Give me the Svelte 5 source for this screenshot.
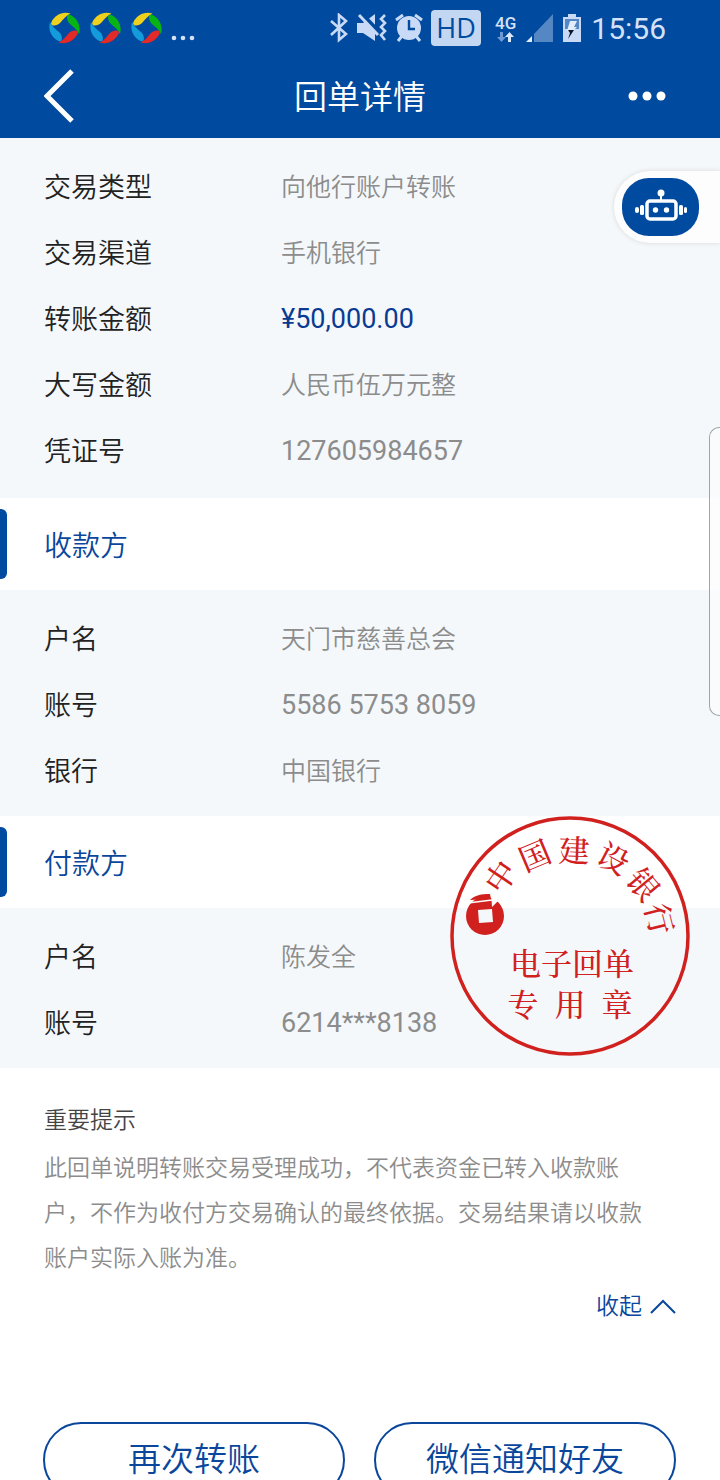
<script lang="ts">
    type Row = { label: string; value: string; kind?: "number" | "amount" };

    const transaction: Row[] = [
        { label: "交易类型", value: "向他行账户转账" },
        { label: "交易渠道", value: "手机银行" },
        { label: "转账金额", value: "¥50,000.00", kind: "amount" },
        { label: "大写金额", value: "人民币伍万元整" },
        { label: "凭证号", value: "127605984657", kind: "number" },
    ];

    const payee: Row[] = [
        { label: "户名", value: "天门市慈善总会" },
        { label: "账号", value: "5586 5753 8059", kind: "number" },
        { label: "银行", value: "中国银行" },
    ];

    const payer: Row[] = [
        { label: "户名", value: "陈发全" },
        { label: "账号", value: "6214***8138", kind: "number" },
    ];

    // characters along the upper arc of the seal
    const sealArc = [
        { char: "中", x: 51, y: 61, angle: -56 },
        { char: "国", x: 85, y: 40, angle: -23 },
        { char: "建", x: 124, y: 35, angle: 2 },
        { char: "设", x: 163, y: 43, angle: 28 },
        { char: "银", x: 193, y: 69, angle: 50 },
        { char: "行", x: 209, y: 103, angle: 76 },
    ];

    const ballColors = ["#eed01e", "#08b315", "#e22a28", "#149bdc"];

    let expanded = $state(true);
</script>

{#snippet rows(items: Row[])}
    <dl class="rows">
        {#each items as item}
            <div class="row">
                <dt>{item.label}</dt>
                <dd class={item.kind}>{item.value}</dd>
            </div>
        {/each}
    </dl>
{/snippet}

<div class="page">
    <header>
        <div class="status">
            <div class="apps">
                {#each [0, 1, 2] as _}
                    <svg width="33" height="32" viewBox="0 0 32 32">
                        {#each ballColors as color, i}
                            <path
                                fill={color}
                                transform="rotate({i * 90} 16 16)"
                                d="M3 10C6 4 13 -1 22 1.500C17 4 15 7 12 10.500C9 14 1 15 3 10Z"
                            />
                        {/each}
                    </svg>
                {/each}
                <svg width="27" height="34" viewBox="0 0 27 34" fill="#d4e1f6">
                    <circle cx="3" cy="27" r="2.300" />
                    <circle cx="12" cy="27" r="2.300" />
                    <circle cx="21" cy="27" r="2.300" />
                </svg>
            </div>
            <div class="system">
                <svg width="20" height="30" viewBox="0 0 20 30" fill="none" stroke="#c8daf5" stroke-width="2.600">
                    <path d="M2 8L17 21L10 27V2L17 8L2 22" />
                </svg>
                <svg width="30" height="30" viewBox="0 0 30 30">
                    <path fill="#c8daf5" d="M0 10H6L18 1V28L6 20H0Z" />
                    <path fill="none" stroke="#004a9f" stroke-width="4" d="M4 0L24 21" />
                    <path fill="none" stroke="#c8daf5" stroke-width="3" d="M2 2L21 22" />
                    <path fill="none" stroke="#c8daf5" stroke-width="2.600" d="M28 2L24 6L28 10L24 14L28 18L24 22L28 27" />
                </svg>
                <svg width="28" height="30" viewBox="0 0 28 30">
                    <circle cx="14" cy="15" r="12" fill="#c8daf5" />
                    <path fill="none" stroke="#c8daf5" stroke-width="3" d="M1 7L8 2M20 2L27 7M7 23L3 28M21 23L25 28" />
                    <path fill="none" stroke="#004a9f" stroke-width="2.400" d="M14 7V16H20" />
                </svg>
                <span class="hd">HD</span>
                <span class="network">
                    4G
                    <svg width="18" height="10" viewBox="0 0 18 10">
                        <path fill="#6d98d2" d="M3 0H6V5H9L4.500 10L0 5H3Z" />
                        <path fill="#dce8fa" d="M11 10H14V5H17L12.500 0L8 5H11Z" />
                    </svg>
                </span>
                <svg width="27" height="28" viewBox="0 0 27 28">
                    <path fill="#5587c5" d="M8 20L27 0V28H8Z" />
                    <path fill="#e2edfb" d="M0 28L6 22V28Z" />
                </svg>
                <svg class="battery" width="18" height="28" viewBox="0 0 18 28">
                    <path fill="#c8daf5" d="M5 0H13V3H18V28H0V3H5Z" />
                    <path fill="#5587c5" d="M2 5H16V15H2Z" />
                    <path fill="#e2edfb" d="M7 7H14L11 13H14L10 17H4Z" />
                    <path fill="#0b1828" d="M5 16H11L5 25L7 19Z" />
                </svg>
                <time>15:56</time>
            </div>
        </div>
        <nav>
            <button class="icon-button" aria-label="返回">
                <svg width="32" height="54" viewBox="0 0 32 54" fill="none" stroke="#fff" stroke-width="5">
                    <path d="M28 2L3 27L28 52" />
                </svg>
            </button>
            <h1>回单详情</h1>
            <button class="icon-button more" aria-label="更多">
                <svg width="38" height="10" viewBox="0 0 38 10" fill="#fff">
                    <circle cx="5" cy="5" r="4.500" />
                    <circle cx="19" cy="5" r="4.500" />
                    <circle cx="33" cy="5" r="4.500" />
                </svg>
            </button>
        </nav>
    </header>

    <main>
        {@render rows(transaction)}

        <section>
            <h2>收款方</h2>
            {@render rows(payee)}
        </section>

        <section class="payer">
            <h2>付款方</h2>
            {@render rows(payer)}
            <svg class="seal" width="240" height="240" viewBox="0 0 240 240">
                <circle cx="120" cy="120" r="118" fill="none" stroke="#d0211f" stroke-width="3.500" />
                <circle cx="35" cy="100" r="19" fill="#d0211f" />
                <path fill="#f4f8fb" d="M28 94L42 93L43 106L29 107Z" />
                <path fill="#fff" d="M41 76H58V84H49L42 91Z" />
                <path fill="#d0211f" d="M20 84C25 79 31 78 40 78L41 83Z" />
                <path fill="none" stroke="#fff" stroke-width="1.500" d="M18 87L42 84" />
                {#each sealArc as { char, x, y, angle }}
                    <text {x} {y} dy="11" transform="rotate({angle} {x} {y})">{char}</text>
                {/each}
                <text x="122" y="159" class="wide">电子回单</text>
                <text x="73" y="200">专</text>
                <text x="120" y="200">用</text>
                <text x="167" y="200">章</text>
            </svg>
        </section>

        <div class="notice">
            {#if expanded}
                <h3>重要提示</h3>
                <p>
                    此回单说明转账交易受理成功，不代表资金已转入收款账户，不作为收付方交易确认的最终依据。交易结果请以收款账户实际入账为准。
                </p>
            {/if}
            <button class="toggle" onclick={() => (expanded = !expanded)}>
                {expanded ? "收起" : "展开"}
                <svg class:flipped={!expanded} width="26" height="16" viewBox="0 0 26 16" fill="none" stroke="#0a479c" stroke-width="2">
                    <path d="M1 14L13 2L25 14" />
                </svg>
            </button>
        </div>

        <div class="actions">
            <button>再次转账</button>
            <button>微信通知好友</button>
        </div>
    </main>

    <div class="assistant">
        <button aria-label="智能客服">
            <svg width="52" height="36" viewBox="0 0 52 36">
                <rect x="12" y="12" width="29" height="18" rx="3" fill="none" stroke="#fff" stroke-width="3.500" />
                <path stroke="#fff" stroke-width="2" d="M26 5V12" />
                <g fill="#fff">
                    <circle cx="26" cy="4" r="3.500" />
                    <circle cx="20.500" cy="21" r="2.700" />
                    <circle cx="31.500" cy="21" r="2.700" />
                    <rect x="5" y="16" width="4" height="10" rx="1.500" />
                    <rect x="44" y="16" width="4" height="10" rx="1.500" />
                    <rect x="0" y="18" width="4" height="6" rx="2" />
                    <rect x="49" y="18" width="3" height="6" rx="1.500" />
                </g>
            </svg>
        </button>
    </div>
    <div class="edge-panel"></div>
</div>

<style>
    :global(body) {
        margin: 0;
        background: #fff;
    }

    .page {
        position: relative;
        height: 100vh;
        overflow: hidden auto;
        scrollbar-width: none;
        background: #fff;
        color: #222;
        font-family: Roboto, "Noto Sans CJK SC", sans-serif;
        font-weight: 350;
    }

    h1,
    h2,
    h3,
    p,
    dl,
    dd {
        margin: 0;
        font-weight: 350;
    }

    svg {
        display: block;
        flex: none;
    }

    button {
        padding: 0;
        border: 0;
        background: none;
        color: inherit;
        font: inherit;
        cursor: pointer;
    }

    header {
        height: 138px;
        background: #004a9f;
        color: #fff;
    }

    .status {
        display: flex;
        justify-content: space-between;
        height: 56px;
        padding: 0 54px 0 48px;
    }

    .apps,
    .system {
        display: flex;
        align-items: center;
        gap: 8px;
        color: #d4e1f6;
    }

    .hd {
        width: 50px;
        margin-right: 6px;
        border-radius: 4px;
        background: #c3d6f2;
        color: #004a9f;
        font-family: "Open Sans", sans-serif;
        font-size: 27px;
        font-weight: 400;
        line-height: 36px;
        text-align: center;
    }

    .network {
        display: flex;
        flex-direction: column;
        align-items: center;
        gap: 1px;
        margin-right: 2px;
        font-size: 17px;
        font-weight: 500;
        line-height: 16px;
    }

    .battery {
        margin: 0 2px;
    }

    time {
        font-size: 30px;
        font-weight: 400;
    }

    nav {
        display: grid;
        grid-template-columns: 1fr auto 1fr;
        align-items: center;
        height: 80px;
        padding: 0 44px;
    }

    h1 {
        padding-top: 4px;
        font-size: 33px;
        line-height: 48px;
    }

    .icon-button {
        justify-self: start;
    }

    .more {
        justify-self: end;
        margin-right: 10px;
    }

    .rows {
        padding: 14px 44px;
        background: #f4f8fb;
    }

    main > .rows {
        padding-bottom: 16px;
    }

    .row {
        display: grid;
        grid-template-columns: 3fr 5fr;
        align-items: center;
        height: 66px;
    }

    dt {
        font-size: 27px;
    }

    dd {
        color: #8c8c8c;
        font-size: 25px;
    }

    .number,
    .amount {
        padding-top: 3px;
        font-size: 27px;
        font-weight: 400;
    }

    .amount {
        color: #0a3b92;
    }

    h2 {
        display: flex;
        align-items: center;
        gap: 37px;
        height: 92px;
        color: #0a479c;
        font-size: 28px;
    }

    h2::before {
        content: "";
        width: 7px;
        height: 70px;
        border-radius: 0 6px 6px 0;
        background: #004a9f;
    }

    .payer {
        position: relative;
    }

    .seal {
        position: absolute;
        top: 0;
        right: 30px;
    }

    .seal text {
        fill: #d0211f;
        font-family: "Noto Serif CJK SC", "Noto Sans CJK SC", serif;
        font-size: 31px;
        font-weight: 500;
        text-anchor: middle;
    }

    .notice {
        display: flex;
        flex-direction: column;
        padding: 36px 44px 0;
        color: #8c8c8c;
        font-size: 23px;
    }

    h3 {
        color: #444;
        font-size: 23px;
        line-height: 34px;
    }

    p {
        padding: 8px 16px 0 0;
        line-height: 45px;
    }

    .toggle {
        display: flex;
        align-items: center;
        align-self: flex-end;
        gap: 8px;
        margin-top: 9px;
        color: #0a479c;
        line-height: 34px;
    }

    .flipped {
        transform: rotate(180deg);
    }

    .actions {
        display: grid;
        grid-template-columns: 1fr 1fr;
        gap: 29px;
        padding: 98px 44px 24px 43px;
    }

    .actions button {
        height: 76px;
        border: 2px solid #0a479c;
        border-radius: 38px;
        color: #0a479c;
        font-size: 33px;
        line-height: 36px;
    }

    .assistant {
        position: absolute;
        top: 171px;
        right: 0;
        padding: 7px 21px 7px 8px;
        border-radius: 36px 0 0 36px;
        background: #fdfdfe;
        box-shadow: 0 0 5px rgba(0, 0, 0, 0.12);
    }

    .assistant button {
        display: flex;
        align-items: center;
        justify-content: center;
        width: 77px;
        height: 58px;
        border-radius: 27px;
        background: #004a9f;
    }

    .edge-panel {
        position: absolute;
        top: 427px;
        right: 0;
        box-sizing: border-box;
        width: 11px;
        height: 289px;
        border: 1px solid #a4a4a4;
        border-right: 0;
        border-radius: 10px 0 0 10px;
        background: rgba(252, 252, 252, 0.7);
    }
</style>
